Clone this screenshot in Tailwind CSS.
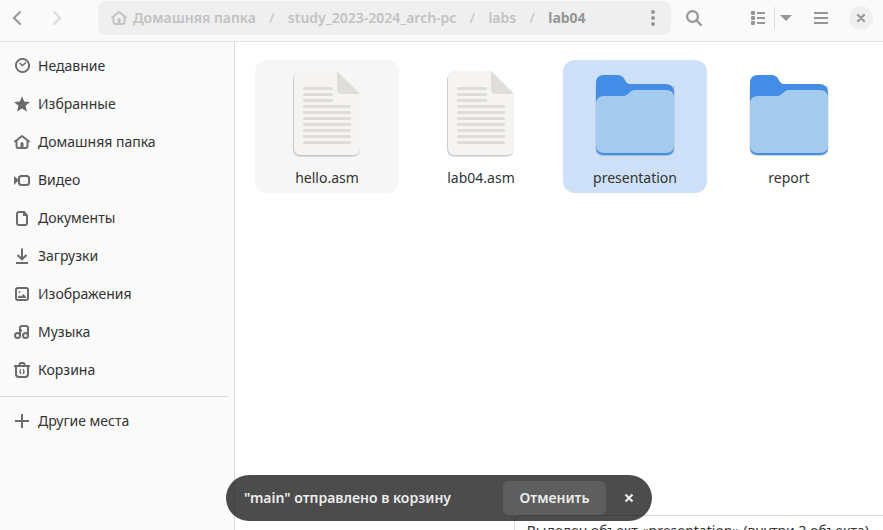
<!DOCTYPE html>
<html lang="ru">
<head>
<meta charset="utf-8">
<meta name="viewport" content="width=device-width, initial-scale=1">
<title>lab04</title>
<script src="https://cdn.jsdelivr.net/npm/@tailwindcss/browser@4"></script>
</head>
<body class="relative flex h-screen flex-col overflow-hidden bg-white font-['Noto_Sans',sans-serif] text-[14px] leading-5 text-[#333333]">
<svg class="hidden">
  <symbol id="home" viewBox="0 0 16 16"><path d="M1 7.500 8 2l7 5.500" fill="none" stroke="currentColor" stroke-width="1.900" stroke-linejoin="round" stroke-linecap="round"/><path d="M2.500 7v5q0 2 2 2h7q2 0 2-2V7" fill="none" stroke="currentColor" stroke-width="1.900"/><path d="M6.500 14V9.500q0-1.300 1.500-1.300t1.500 1.300V14z" fill="currentColor"/></symbol>
  <symbol id="doc" viewBox="0 0 72 92">
    <path d="M10 3h35l24 22v54q0 8-8 8H10q-8 0-8-8V11q0-8 8-8z" fill="#000" opacity=".12"/>
    <path d="M10 1.500h35.500l23.500 22.500v54q0 8-8 8H10q-8 0-8-8v-68.500q0-8 8-8z" fill="#000" opacity=".08"/>
    <path d="M10 1h36l23 23v54q0 7-7 7H10q-7 0-7-7V8q0-7 7-7z" fill="#f5f4f3"/>
    <path d="M46 1l23 23H51q-5 0-5-5z" fill="#deddda"/>
    <path d="M13.500 18.500h27M13.500 24.500h27M13.500 30.500h27M13.500 36.500h45M13.500 42.500h45M13.500 48.500h45M13.500 54.500h45M13.500 60.500h45M13.500 66.500h45M13.500 72.500h45" stroke="#deddda" stroke-width="3" stroke-linecap="round"/>
  </symbol>
  <symbol id="folder" viewBox="0 0 80 84">
    <path d="M.5 12h79v62q0 8-8 8h-63q-8 0-8-8z" fill="#000" opacity=".15"/>
    <path d="M9 1h13c9 0 7 9 13 9h35q9 0 9 9v54q0 8-8 8H9q-8 0-8-8V9q0-8 8-8z" fill="#438de6"/>
    <path d="M9 22h19c6 0 6-6 12-6h31q8 0 8 8v47q0 8-8 8H9q-8 0-8-8V30q0-8 8-8z" fill="#a4caee"/>
  </symbol>
</svg>

<header class="flex shrink-0 items-center border-b border-[#e2e2e2] bg-[#fafafa] pt-px pr-[5px] pb-[6px] text-[#969696]">
  <button type="button" aria-label="Назад" class="flex h-[34px] w-[34px] items-center justify-center"><svg class="size-4" viewBox="0 0 16 16"><path d="M11 2 5 8l6 6" fill="none" stroke="currentColor" stroke-width="2" stroke-linecap="round"/></svg></button>
  <button type="button" disabled aria-label="Вперёд" class="ml-[6px] flex h-[34px] w-[34px] items-center justify-center text-[#dadada]"><svg class="size-4" viewBox="0 0 16 16"><path d="M5 2l6 6-6 6" fill="none" stroke="currentColor" stroke-width="2" stroke-linecap="round"/></svg></button>
  <nav aria-label="Путь" class="ml-6 flex h-[34px] min-w-0 flex-1 items-center justify-between rounded-lg bg-[#efefef] pl-[13px] font-semibold text-[#c2c2c2]">
    <ol class="flex items-center whitespace-nowrap">
      <li><a href="#" class="flex items-center gap-[6px]"><svg class="size-4"><use href="#home"/></svg>Домашняя папка</a></li>
      <li class="flex"><span class="w-8 text-center font-normal">/</span><a href="#">study_2023-2024_arch-pc</a></li>
      <li class="flex"><span class="w-8 text-center font-normal">/</span><a href="#">labs</a></li>
      <li class="flex"><span class="w-8 text-center font-normal">/</span><a href="#" aria-current="page" class="font-bold text-[#969696]">lab04</a></li>
    </ol>
    <button type="button" aria-label="Меню папки" class="flex h-[34px] w-9 items-center justify-center text-[#969696]"><svg class="size-4" viewBox="0 0 16 16" fill="currentColor"><circle cx="8" cy="2" r="2"/><circle cx="8" cy="8" r="2"/><circle cx="8" cy="14" r="2"/></svg></button>
  </nav>
  <button type="button" aria-label="Поиск" class="ml-[6px] flex h-[34px] w-[34px] items-center justify-center"><svg class="size-4" viewBox="0 0 16 16"><circle cx="6.500" cy="6.500" r="5.400" fill="none" stroke="currentColor" stroke-width="2.200"/><path d="M10.500 10.500l4.500 4.500" stroke="currentColor" stroke-width="2.400" stroke-linecap="round"/></svg></button>
  <button type="button" aria-label="Вид списком" class="ml-[30px] flex h-[34px] w-[33px] items-center justify-center"><svg class="size-4" viewBox="0 0 16 16" fill="currentColor"><rect x="1" y="1" width="4" height="4" rx="1"/><rect x="1" y="6" width="4" height="4" rx="1"/><rect x="1" y="11" width="4" height="4" rx="1"/><path d="M7 2h8v2H7zM7 7h8v2H7zM7 12h8v2H7z"/></svg></button>
  <span class="h-[22px] w-px bg-[#dcdcdc]"></span>
  <button type="button" aria-label="Параметры вида" class="flex h-[34px] w-[22px] items-center justify-center"><svg class="size-4" viewBox="0 0 16 16"><path d="M2 5h12L8 11z" fill="currentColor"/></svg></button>
  <button type="button" aria-label="Главное меню" class="ml-[7px] flex h-[34px] w-[34px] items-center justify-center"><svg class="size-4" viewBox="0 0 16 16"><path d="M1 2h14v2H1zM1 7h14v2H1zM1 12h14v2H1z" fill="currentColor"/></svg></button>
  <button type="button" aria-label="Закрыть" class="ml-[6px] flex h-[34px] w-[34px] items-center justify-center"><span class="flex size-6 items-center justify-center rounded-full bg-[#efefef]"><svg class="size-4" viewBox="0 0 16 16"><path d="M5 5l6 6M11 5l-6 6" stroke="currentColor" stroke-width="2.200" stroke-linecap="round"/></svg></span></button>
</header>

<div class="flex min-h-0 flex-1">
  <aside class="w-[235px] shrink-0 border-r border-[#dadada] bg-[#fafafa] pt-[5px]">
    <nav aria-label="Места">
      <ul class="[&_a]:flex [&_a]:h-[38px] [&_a]:items-center [&_a]:gap-2 [&_a]:pl-[14px] [&_svg]:size-4 [&_svg]:text-[#6b6b6b]">
        <li><a href="#"><svg viewBox="0 0 16 16" fill="none" stroke="currentColor"><circle cx="8.500" cy="7.500" r="6.600" stroke-width="1.900"/><path d="M5.500 5l3 2.500L12 4.500" stroke-width="1.400"/></svg>Недавние</a></li>
        <li><a href="#"><svg viewBox="0 0 16 16"><path d="M8 .3l2.200 5.200 5.800.5-4.400 3.800 1.400 5.700L8 12.500 3 15.500 4.400 9.800 0 6l5.800-.5z" fill="currentColor"/></svg>Избранные</a></li>
        <li><a href="#"><svg><use href="#home"/></svg>Домашняя папка</a></li>
        <li><a href="#"><svg viewBox="0 0 16 16"><path d="M0 4l4 3.500V5h1v7H4V9L0 13z" fill="currentColor"/><rect x="5" y="4" width="10" height="9" rx="2.500" fill="none" stroke="currentColor" stroke-width="2"/></svg>Видео</a></li>
        <li><a href="#"><svg viewBox="0 0 16 16"><path d="M5 2h5l3 3.500V13q0 2-2 2H5q-2 0-2-2V4q0-2 2-2z" fill="none" stroke="currentColor" stroke-width="2" stroke-linejoin="round"/><path d="M9 2v4h4z" fill="currentColor"/></svg>Документы</a></li>
        <li><a href="#"><svg viewBox="0 0 16 16"><path d="M8 .5V11M3.500 7L8 11.300 12.500 7M2 15h12" fill="none" stroke="currentColor" stroke-width="2"/></svg>Загрузки</a></li>
        <li><a href="#"><svg viewBox="0 0 16 16"><rect x="2" y="2" width="12" height="12" rx="2" fill="none" stroke="currentColor" stroke-width="2"/><path d="M4 12v-1.500l2-1 1 1L9.500 8l2.500 3v1z" fill="currentColor"/><circle cx="5.500" cy="6" r=".9" fill="currentColor"/></svg>Изображения</a></li>
        <li><a href="#"><svg viewBox="0 0 16 16" fill="none" stroke="currentColor" stroke-width="2"><circle cx="3.500" cy="11.500" r="2.500"/><circle cx="11.500" cy="11.500" r="2.500"/><path d="M6 11.500V4q0-2 2-2h4q2 0 2 2v7.500M6 6.500h2"/></svg>Музыка</a></li>
        <li><a href="#"><svg viewBox="0 0 16 16" fill="none" stroke="currentColor"><path d="M0 4h16M5.500 3.500v-1Q5.500 1 7 1h2q1.500 0 1.500 1.500v1M2 4v8q0 3 3 3h6q3 0 3-3V4" stroke-width="2"/><path d="M6.700 7Q5.200 9.500 6.700 12M9.300 7q1.500 2.500 0 5" stroke-width="1.200"/></svg>Корзина</a></li>
        <li class="mt-[7px] mr-[6px] border-t border-[#dadada] pt-[5px]"><a href="#"><svg viewBox="0 0 16 16"><path d="M8 1v14M1 8h14" stroke="currentColor" stroke-width="2"/></svg>Другие места</a></li>
      </ul>
    </nav>
  </aside>

  <main class="relative min-w-0 flex-1 overflow-hidden">
    <ul class="flex flex-wrap gap-[10px] pt-[18px] pl-5 [&_a]:flex [&_a]:h-[133px] [&_a]:w-36 [&_a]:flex-col [&_a]:items-center [&_a]:justify-between [&_a]:rounded-xl [&_a]:pt-[10px] [&_a]:pb-[5px]">
      <li><a href="#" class="bg-[#f6f6f6]"><svg class="h-[92px] w-[72px]"><use href="#doc"/></svg>hello.asm</a></li>
      <li><a href="#"><svg class="h-[92px] w-[72px]"><use href="#doc"/></svg>lab04.asm</a></li>
      <li><a href="#" aria-current="true" class="bg-[#cde0f7]"><svg class="mt-1 h-[84px] w-20"><use href="#folder"/></svg>presentation</a></li>
      <li><a href="#"><svg class="mt-1 h-[84px] w-20"><use href="#folder"/></svg>report</a></li>
    </ul>
    <div class="absolute right-0 -bottom-4 rounded-tl-lg border-t border-l border-[#dadada] bg-white pt-[5px] pr-[14px] pb-[5px] pl-3 whitespace-nowrap">Выделен объект «presentation» (внутри 3 объекта)</div>
  </main>
</div>

<div class="pointer-events-none absolute inset-x-0 bottom-[9px] flex justify-center pr-[5px]">
  <div role="status" class="pointer-events-auto flex h-[46px] items-center rounded-full bg-black/70 pr-[6px] pl-[18px] font-semibold whitespace-nowrap text-[#ededed]">
    <span class="min-w-[259px]">"main" отправлено в корзину</span>
    <button type="button" class="h-[34px] min-w-[103px] rounded-md bg-white/10 px-4">Отменить</button>
    <button type="button" aria-label="Закрыть уведомление" class="ml-[6px] flex h-[34px] w-[34px] items-center justify-center rounded-full"><svg class="size-4" viewBox="0 0 16 16"><path d="M4.500 4.500l7 7M11.500 4.500l-7 7" stroke="currentColor" stroke-width="2.200"/></svg></button>
  </div>
</div>
</body>
</html>
